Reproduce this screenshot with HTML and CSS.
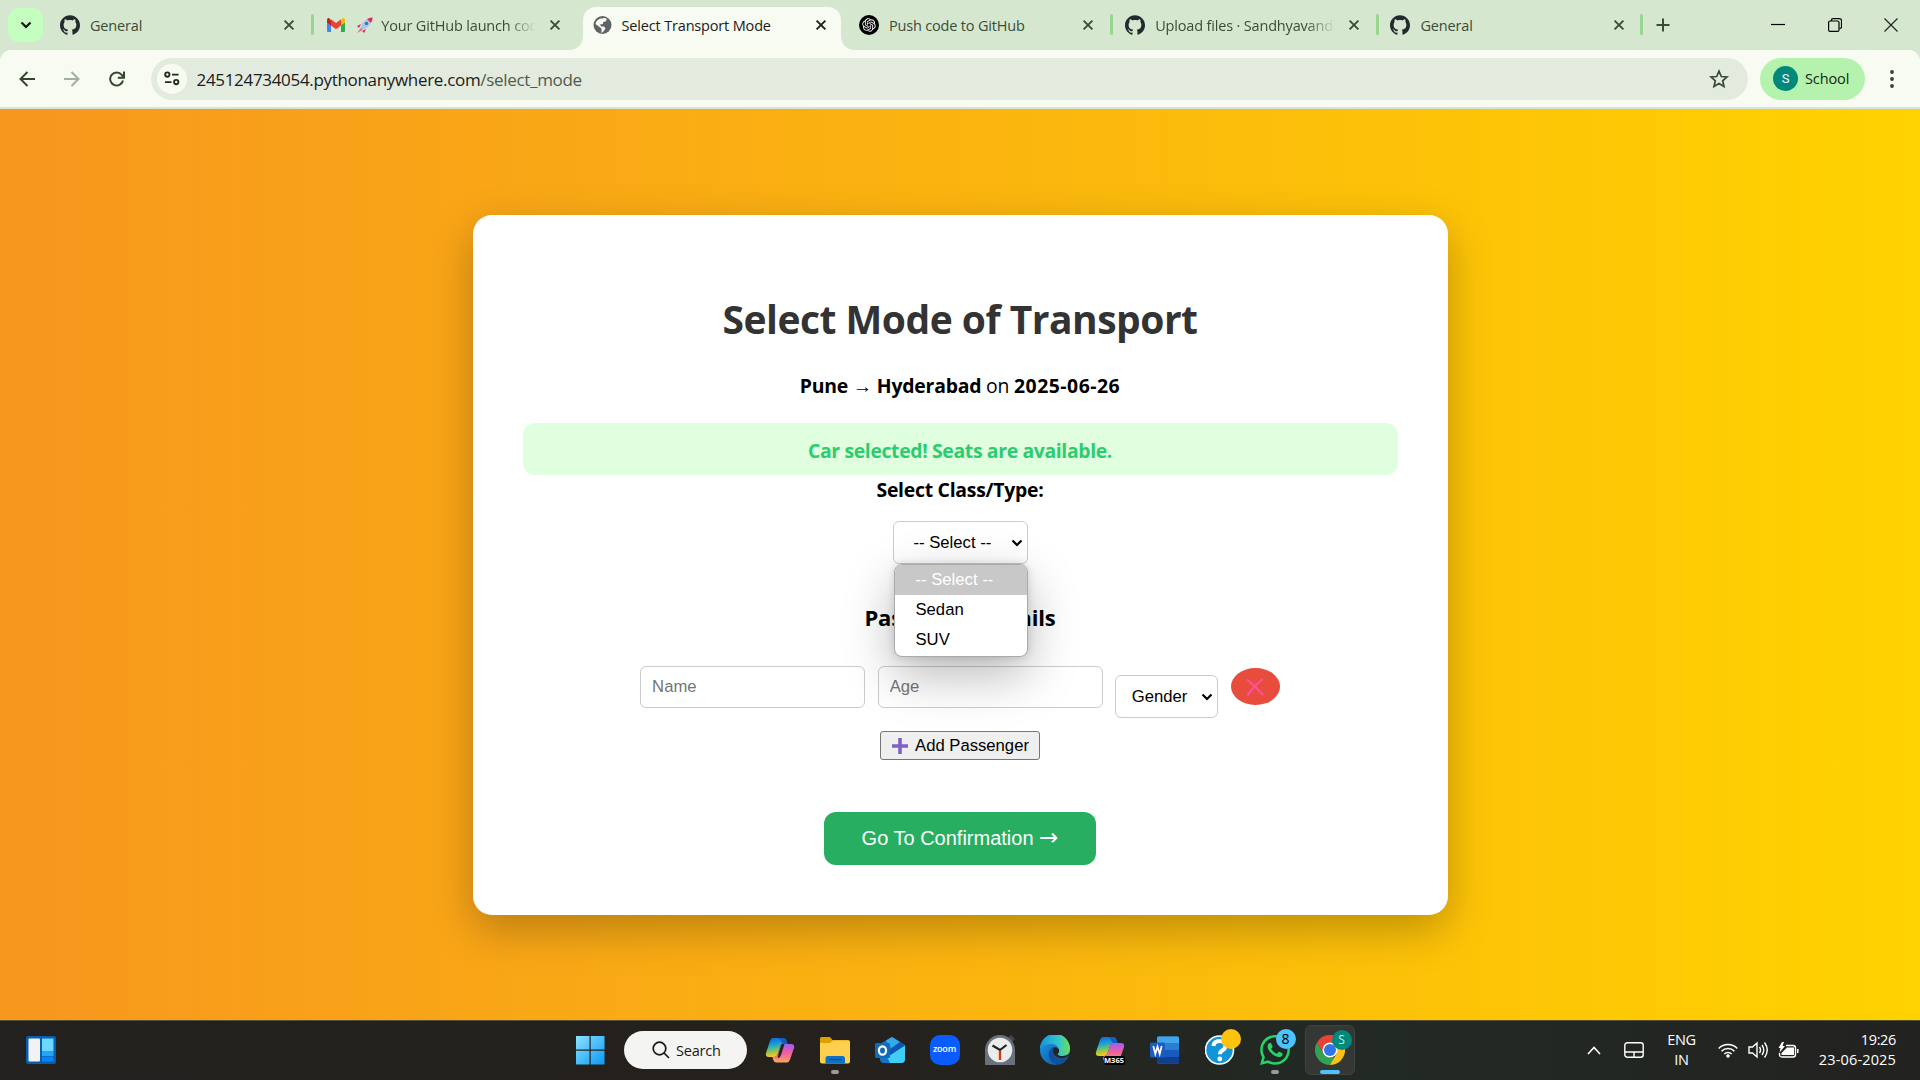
FILE: index.html
```html
<!DOCTYPE html>
<html lang="en">
<head>
<meta charset="utf-8">
<title>Select Transport Mode</title>
<link rel="stylesheet" href="styles.css">
</head>
<body>
<svg class="defs" aria-hidden="true">
  <symbol id="github" viewBox="0 0 24 24"><path fill="#24292f" d="M12 .297c-6.63 0-12 5.373-12 12 0 5.303 3.438 9.8 8.205 11.385.6.113.82-.258.82-.577 0-.285-.01-1.04-.015-2.04-3.338.724-4.042-1.61-4.042-1.61C4.422 18.07 3.633 17.7 3.633 17.7c-1.087-.744.084-.729.084-.729 1.205.084 1.838 1.236 1.838 1.236 1.07 1.835 2.809 1.305 3.495.998.108-.776.417-1.305.76-1.605-2.665-.3-5.466-1.332-5.466-5.93 0-1.31.465-2.38 1.235-3.22-.135-.303-.54-1.523.105-3.176 0 0 1.005-.322 3.3 1.23.96-.267 1.98-.399 3-.405 1.02.006 2.04.138 3 .405 2.28-1.552 3.285-1.23 3.285-1.23.645 1.653.24 2.873.12 3.176.765.84 1.23 1.91 1.23 3.22 0 4.61-2.805 5.625-5.475 5.92.42.36.81 1.096.81 2.22 0 1.606-.015 2.896-.015 3.286 0 .315.21.69.825.57C20.565 22.092 24 17.592 24 12.297c0-6.627-5.373-12-12-12"/></symbol>
  <symbol id="cross" viewBox="0 0 12 12"><path d="M1.6 1.6l8.8 8.8M10.4 1.6L1.6 10.4" stroke="currentColor" stroke-width="1.9" fill="none"/></symbol>
  <symbol id="chev" viewBox="0 0 12 8"><path d="M1.5 1.5L6 6l4.500-4.500" stroke="currentColor" stroke-width="2.200" fill="none"/></symbol>
</svg>

<header class="browser">
  <div class="tabstrip">
    <button class="tab-search"><svg width="12" height="8"><use href="#chev"/></svg></button>
    <div class="tab"><svg class="fav" width="20" height="20"><use href="#github"/></svg><span class="title">General</span><svg class="x" width="12" height="12"><use href="#cross"/></svg></div>
    <div class="tab sep">
      <svg class="fav" width="20" height="20" viewBox="0 0 20 20"><path d="M1 4.500v11.500q0 1 1 1h3V8.500z" fill="#4285f4"/><path d="M19 4.500v11.500q0 1-1 1h-3V8.500z" fill="#34a853"/><path d="M15 5.500v5l4-3V5q0-2.500-2.500-1.800z" fill="#fbbc04"/><path d="M5 5.500v5l-4-3V5q0-2.500 2.500-1.800z" fill="#c5221f"/><path d="M5 4.300l5 3.800 5-3.800v6.200l-5 3.800-5-3.800z" fill="#ea4335"/></svg>
      <span class="title fade"><svg class="rocket" width="17" height="17" viewBox="0 0 17 17"><path d="M5 7l-4 2 2 2zM10 12l-2 4-2-2z" fill="#e8245c"/><path d="M4 12Q6 4 12 2l3 3q-2 6-9 8z" fill="#a9c8e8"/><path d="M11 2q3-1.800 5.500-1.500Q16.800 3 15 6z" fill="#e8245c"/><circle cx="10.500" cy="6.500" r="1.800" fill="#3f6fd0"/><path d="M5 11l-4 5 5.500-3z" fill="#ff5a76"/></svg>Your GitHub launch code</span>
      <svg class="x" width="12" height="12"><use href="#cross"/></svg></div>
    <div class="tab active">
      <svg class="fav globe" width="20" height="20" viewBox="0 0 20 20"><circle cx="9.500" cy="10" r="9" fill="#5f6368"/><path d="M9 3.500q3-1 5 .5l-1.500 2.500-2.500.5v2l-3 .5 1 2h3l1.500 2-2.500 3.500-1.500 1V13.500l-2-1.500-4-3q.5-4 5-5.500z" fill="#f8fbf2"/></svg>
      <span class="title">Select Transport Mode</span><svg class="x" width="12" height="12"><use href="#cross"/></svg></div>
    <div class="tab">
      <svg class="fav" width="20" height="20" viewBox="0 0 40 40"><circle cx="20" cy="20" r="20" fill="#000"/><path transform="translate(6.500 6.500) scale(1.125)" fill="#fff" d="M22.282 9.821a5.985 5.985 0 0 0-.516-4.910 6.046 6.046 0 0 0-6.510-2.900A6.065 6.065 0 0 0 4.981 4.182a5.985 5.985 0 0 0-3.998 2.900 6.046 6.046 0 0 0 .743 7.097 5.980 5.980 0 0 0 .511 4.911 6.051 6.051 0 0 0 6.515 2.900A5.985 5.985 0 0 0 13.260 24a6.056 6.056 0 0 0 5.772-4.206 5.989 5.989 0 0 0 3.998-2.900 6.056 6.056 0 0 0-.748-7.073zm-9.022 12.608a4.476 4.476 0 0 1-2.876-1.041l.142-.080 4.778-2.758a.795.795 0 0 0 .393-.681v-6.737l2.020 1.169a.071.071 0 0 1 .038.052v5.583a4.504 4.504 0 0 1-4.495 4.494zm-9.661-4.125a4.471 4.471 0 0 1-.535-3.014l.142.085 4.783 2.758a.771.771 0 0 0 .781 0l5.843-3.369v2.332a.080.080 0 0 1-.033.062L9.740 19.950a4.499 4.499 0 0 1-6.141-1.646zM2.341 7.896a4.485 4.485 0 0 1 2.366-1.973V11.600a.766.766 0 0 0 .388.677l5.814 3.354-2.020 1.169a.076.076 0 0 1-.071 0l-4.830-2.787A4.504 4.504 0 0 1 2.341 7.872zm16.596 3.856L13.104 8.364 15.119 7.200a.076.076 0 0 1 .071 0l4.830 2.791a4.494 4.494 0 0 1-.677 8.104v-5.677a.790.790 0 0 0-.407-.667zm2.011-3.023l-.142-.085-4.774-2.782a.776.776 0 0 0-.785 0L9.409 9.230V6.897a.066.066 0 0 1 .028-.062l4.830-2.787a4.499 4.499 0 0 1 6.680 4.660zM8.307 12.863l-2.020-1.164a.080.080 0 0 1-.038-.057V6.074a4.499 4.499 0 0 1 7.376-3.454l-.142.081L8.704 5.459a.795.795 0 0 0-.393.681zm1.098-2.365l2.602-1.500 2.607 1.500v2.999l-2.597 1.500-2.607-1.500z"/></svg>
      <span class="title">Push code to GitHub</span><svg class="x" width="12" height="12"><use href="#cross"/></svg></div>
    <div class="tab sep"><svg class="fav" width="20" height="20"><use href="#github"/></svg><span class="title fade">Upload files · Sandhyavandana</span><svg class="x" width="12" height="12"><use href="#cross"/></svg></div>
    <div class="tab sep last"><svg class="fav" width="20" height="20"><use href="#github"/></svg><span class="title">General</span><svg class="x" width="12" height="12"><use href="#cross"/></svg></div>
    <div class="new-tab"><svg width="14" height="14" viewBox="0 0 14 14"><path d="M7 .5v13M.5 7h13" stroke="#3b4c39" stroke-width="2"/></svg></div>
    <div class="win">
      <svg width="14" height="14" viewBox="0 0 14 14"><path d="M0 6.500h14" stroke="#000" stroke-width="1.200"/></svg>
      <svg width="14" height="14" viewBox="0 0 14 14" fill="none" stroke="#000" stroke-width="1.200"><rect x=".6" y="3" width="10.400" height="10.400" rx="1.500"/><path d="M3.500 3V2q0-1.400 1.500-1.400h6.500q2 0 2 2V9q0 1.500-2 1.500"/></svg>
      <svg width="14" height="14" viewBox="0 0 14 14"><path d="M.5.5l13 13M13.500.5l-13 13" stroke="#222" stroke-width="1.200"/></svg>
    </div>
  </div>
  <div class="toolbar">
    <nav class="nav">
      <svg width="16" height="16" viewBox="0 0 16 16"><path d="M16 8H1.800M8.500 1L1.500 8l7 7" fill="none" stroke="#33472f" stroke-width="2"/></svg>
      <svg width="16" height="16" viewBox="0 0 16 16"><path d="M0 8h14.200M7.500 1l7 7-7 7" fill="none" stroke="#a2aca0" stroke-width="2"/></svg>
      <svg width="16" height="16" viewBox="0 0 16 16"><path d="M14 9.500A6.500 6.500 0 1 1 12.800 4L14.500 6" fill="none" stroke="#33472f" stroke-width="2"/><path d="M15 .5v6.300H8.800" fill="none" stroke="#33472f" stroke-width="2"/></svg>
    </nav>
    <div class="omnibox">
      <span class="site"><svg width="16" height="15" viewBox="0 0 17 16" fill="none" stroke="#1f2a1e" stroke-width="2"><circle cx="3.500" cy="3.800" r="2.300"/><path d="M8.500 3.800h7M1 11.800h7"/><circle cx="13" cy="11.800" r="2.300"/></svg></span>
      <span class="url">245124734054.pythonanywhere.com<span class="path">/select_mode</span></span>
      <svg width="20" height="20" viewBox="0 0 20 20"><path d="M10 2.200l2.300 5.300 5.700.5-4.300 3.800 1.300 5.700-5-3-5 3 1.300-5.700L2 8l5.700-.5z" fill="none" stroke="#3b483a" stroke-width="1.700"/></svg>
    </div>
    <div class="profile"><span class="avatar">S</span><span>School</span></div>
    <svg class="dots" width="4" height="18" viewBox="0 0 4 18" fill="#33422f"><circle cx="2" cy="2" r="1.900"/><circle cx="2" cy="9" r="1.900"/><circle cx="2" cy="16" r="1.900"/></svg>
  </div>
</header>

<main class="page">
  <section class="card">
    <h1>Select Mode of Transport</h1>
    <p class="route"><b>Pune</b> <span class="arrow">→</span> <b>Hyderabad</b> on <b class="date">2025-06-26</b></p>
    <div class="alert">Car selected! Seats are available.</div>
    <label class="class-label">Select Class/Type:</label>
    <div class="select class-select">
      <span>-- Select --</span><svg width="12" height="8"><use href="#chev"/></svg>
      <ul class="menu"><li class="current">-- Select --</li><li>Sedan</li><li>SUV</li></ul>
    </div>
    <h3>Passenger Details</h3>
    <div class="passenger">
      <input placeholder="Name">
      <input placeholder="Age">
      <div class="select gender"><span>Gender</span><svg width="12" height="8"><use href="#chev"/></svg></div>
      <button class="remove"><svg width="18" height="18" viewBox="0 0 18 18"><path d="M1.500 2q8 6 15 14.500M16 1.500Q8 8 2 16.500" fill="none" stroke="#ff4f9b" stroke-width="2.200" stroke-linecap="round"/></svg></button>
    </div>
    <button class="add"><svg width="16" height="16" viewBox="0 0 16 16"><path d="M6.200 0h3.600v6.200H16v3.600H9.800V16H6.200V9.800H0V6.200h6.200z" fill="#8060c4"/></svg><span>Add Passenger</span></button>
    <button class="go">Go To Confirmation <span class="go-arrow">→</span></button>
  </section>
</main>

<footer class="taskbar">
  <svg class="widgets" width="30" height="28" viewBox="0 0 30 28"><rect width="30" height="28" rx="2" fill="#0a5cb0"/><rect x="2.500" y="2.500" width="11.500" height="23" rx="1" fill="#f2f2f2"/><path d="M16 2.500h11.500V15H16z" fill="#6bd8ff"/><path d="M16 15h11.500v5H16z" fill="#22a4f8"/><path d="M16 20.500h11.500v5H16z" fill="#0a84f0"/></svg>
  <div class="apps">
    <svg class="start" width="30" height="30" viewBox="0 0 30 30"><defs><linearGradient id="w" x2="1" y2="1"><stop stop-color="#8be3ff"/><stop offset="1" stop-color="#0a98f8"/></linearGradient></defs><path fill="url(#w)" d="M1 1h13.500v13.500H1zM15.700 1H29.500v13.500H15.700zM1 15.700h13.500V29.500H1zM15.700 15.700H29.500V29.500H15.700z"/></svg>
    <div class="search"><svg width="18" height="18" viewBox="0 0 18 18" fill="none" stroke="#1a1a1a" stroke-width="1.700"><circle cx="7.500" cy="7.500" r="6.300"/><path d="M12 12l5 5"/></svg><span>Search</span></div>
    <div class="app"><svg width="30" height="30" viewBox="0 0 30 30"><defs><linearGradient id="c1" x2=".2" y2="1"><stop stop-color="#1560d8"/><stop offset=".4" stop-color="#18a0d8"/><stop offset=".7" stop-color="#7cc65a"/><stop offset="1" stop-color="#ffc51f"/></linearGradient><linearGradient id="c2" x2="0" y2="1"><stop stop-color="#a35cf0"/><stop offset=".5" stop-color="#f0609c"/><stop offset="1" stop-color="#ffa557"/></linearGradient></defs><path d="M8 3h10q2.500 0 3.500 3l1 3h-4q-2.500 0-3.500 3l-2.500 7.500Q11.500 22 9 22H4q-4 0-3-4L5 6q1-3 3-3z" fill="url(#c1)"/><path d="M22 27.500H11.500q-2.500 0-3.500-3L7.500 22H9q2.500 0 3.500-2.500L15 12q1-3 3.500-3H26q4 0 3 4l-4 11.500q-1 3-3 3z" fill="url(#c2)"/><path d="M14 17l2.500-8h3L16 20q-1 3-3.500 3z" fill="#262320"/><path d="M13 3h5q2.500 0 3.500 3l1 3h-4q-2-.5-3-4z" fill="#1859c4"/></svg></div>
    <div class="app"><svg width="30" height="30" viewBox="0 0 30 30"><path d="M0 3.500Q0 2 1.500 2H10l2.500 3H28q2 0 2 2v6H0z" fill="#e0a100"/><path d="M0 8h10l3-2.500h15.500q1.500 0 1.500 2V26.500q0 2-2 2H2q-2 0-2-2z" fill="#ffd04e"/><path d="M5.500 28.500V23.500q0-2.500 2.500-2.500h14.500q2.500 0 2.500 2.500v5z" fill="#1070c4"/><path d="M9 24.500h12.500" stroke="#0a4c91" stroke-width="1.300"/></svg><i class="run"></i></div>
    <div class="app"><svg width="30" height="30" viewBox="0 0 30 30"><path d="M5 9L17 2l13 8v14q0 4-4 4H9q-4 0-4-4z" fill="#1673c9"/><path d="M11 5.500L17 2l8 5-9 6z" fill="#35a9ea"/><path d="M30 10L12 22l3 6h11q4 0 4-4z" fill="#42cdf5"/><path d="M25 7l5 3.500-17 11L11 18z" fill="#0a57b5"/><rect y="8" width="15" height="15" rx="1.500" fill="#0f6cbd"/><ellipse cx="7.500" cy="15.500" rx="3.600" ry="4.200" fill="none" stroke="#fff" stroke-width="2.200"/></svg></div>
    <div class="app zoom"><span>zoom</span></div>
    <div class="app"><svg width="30" height="30" viewBox="0 0 30 30"><path d="M23 3l3-3 4 4-3 3z" fill="#43474c"/><path d="M0 30V15a15 15 0 0 1 30 0V30z" fill="#67727c"/><circle cx="15" cy="15" r="12.300" fill="#ececec"/><path d="M7.500 10.500L15 15l6.500-5" stroke="#222" stroke-width="2.200" fill="none"/><path d="M15 16v9" stroke="#d83b01" stroke-width="2.400"/></svg></div>
    <div class="app"><svg width="30" height="30" viewBox="0 0 30 30"><defs><linearGradient id="e1"><stop stop-color="#1593dc"/><stop offset=".6" stop-color="#31c5cf"/><stop offset="1" stop-color="#6ade52"/></linearGradient><linearGradient id="e2" x2="1" y2="1"><stop stop-color="#1b9de2"/><stop offset="1" stop-color="#0c4d9f"/></linearGradient></defs><circle cx="15" cy="15" r="15" fill="url(#e2)"/><path d="M0 14A15 15 0 0 1 30 13.500q.3 6.500-7 7.500-5 .2-5.500-2 2-1.500 1.500-4.500Q17.500 9 11 9 3.500 9 0 14z" fill="url(#e1)"/><path d="M17.500 19q2-1.500 1.500-4.500-1.500-2.500-5-2.500-2 2-1 5.500 2 5 8.500 6 4-.2 7-2.500l2-4.500.5 6-2.500 1.200L30 18q-2.500 3-7 3-5 .2-5.500-2z" fill="#252422"/><path d="M13 12q-6 4-3.800 10.500 3 7 10.500 7 5-1.500 7.800-6.500-7.500 3-11.800-1-3.700-4.500-2.700-10z" fill="#104f9e"/></svg></div>
    <div class="app"><svg width="30" height="30" viewBox="0 0 30 30"><path d="M8 2h10q2.500 0 3.500 3l1 3h-4q-2.500 0-3.500 3l-2.500 7.500Q11.500 21 9 21H4q-4 0-3-4L5 5q1-3 3-3z" fill="url(#c1)"/><path d="M22 26.500H11.500q-2.500 0-3.500-3L9 21q2.500 0 3.500-2.500L15 11q1-3 3.500-3H26q4 0 3 4l-4 11.500q-1 3-3 3z" fill="url(#c2)"/><path d="M13 2h5q2.500 0 3.500 3l1 3h-4q-2-.5-3-4z" fill="#1859c4"/></svg><span class="m365">M365</span></div>
    <div class="app"><svg width="30" height="30" viewBox="0 0 30 30"><rect x="7" y="1.500" width="22" height="27" rx="1.500" fill="#2b7cd3"/><path d="M7 3q0-1.500 1.500-1.500h19Q29 1.500 29 3v5H7z" fill="#41a5ee"/><path d="M7 15h22v7H7z" fill="#185abd"/><path d="M7 22h22v5q0 1.500-1.500 1.500h-19Q7 28.500 7 27z" fill="#103f91"/><rect y="7.500" width="15" height="15" rx="1.500" fill="#1b5cbe"/><path d="M3.300 11l2 8 2.200-7.500 2.200 7.500 2-8" fill="none" stroke="#fff" stroke-width="1.700"/></svg></div>
    <div class="app"><svg width="30" height="30" viewBox="0 0 30 30"><circle cx="14.500" cy="15" r="14" fill="#1295d8" stroke="#fff" stroke-width="1.600"/><path d="M8.500 11q.5-5 6-5t6 4.500q0 3-3 4.700-2.500 1.300-2.500 4" fill="none" stroke="#fff" stroke-width="4"/><circle cx="14.800" cy="24" r="2.400" fill="#fff"/></svg><b class="badge amber"></b></div>
    <div class="app"><svg width="30" height="30" viewBox="0 0 24 24"><path fill="#25d366" d="M17.472 14.382c-.297-.149-1.758-.867-2.030-.967-.273-.099-.471-.148-.670.150-.197.297-.767.966-.940 1.164-.173.199-.347.223-.644.075-.297-.150-1.255-.463-2.390-1.475-.883-.788-1.480-1.761-1.653-2.059-.173-.297-.018-.458.130-.606.134-.133.298-.347.446-.520.149-.174.198-.298.298-.497.099-.198.050-.371-.025-.520-.075-.149-.669-1.612-.916-2.207-.242-.579-.487-.500-.669-.510-.173-.008-.371-.010-.570-.010-.198 0-.520.074-.792.372-.272.297-1.040 1.016-1.040 2.479 0 1.462 1.065 2.875 1.213 3.074.149.198 2.096 3.200 5.077 4.487.709.306 1.262.489 1.694.625.712.227 1.360.195 1.871.118.571-.085 1.758-.719 2.006-1.413.248-.694.248-1.289.173-1.413-.074-.124-.272-.198-.570-.347m-5.421 7.403h-.004a9.870 9.870 0 0 1-5.031-1.378l-.361-.214-3.741.982.998-3.648-.235-.374a9.860 9.860 0 0 1-1.510-5.260c.001-5.450 4.436-9.884 9.888-9.884 2.640 0 5.122 1.030 6.988 2.898a9.825 9.825 0 0 1 2.893 6.994c-.003 5.450-4.437 9.884-9.885 9.884m8.413-18.297A11.815 11.815 0 0 0 12.050 0C5.495 0 .160 5.335.157 11.892c0 2.096.547 4.142 1.588 5.945L.057 24l6.305-1.654a11.882 11.882 0 0 0 5.683 1.448h.005c6.554 0 11.890-5.335 11.893-11.893a11.821 11.821 0 0 0-3.480-8.413z"/></svg><b class="badge blue">8</b><i class="run"></i></div>
    <div class="app open"><svg width="30" height="30" viewBox="0 0 30 30"><path d="M2 7.500A15 15 0 0 1 28 7.500H15L8.500 18.800z" fill="#ea4335"/><path d="M2 7.500L8.500 18.800 15 22.500h6.500L15 30A15 15 0 0 1 2 7.500z" fill="#34a053"/><path d="M28 7.500A15 15 0 0 1 15 30l6.500-11.200V7.500z" fill="#fbc116"/><circle cx="15" cy="15" r="7.500" fill="#fff"/><circle cx="15" cy="15" r="6" fill="#2f74e8"/></svg><b class="badge teal">S</b><i class="run on"></i></div>
  </div>
  <div class="tray">
    <svg class="up" width="14" height="9" viewBox="0 0 14 9"><path d="M1 8l6-6.500L13 8" fill="none" stroke="#fff" stroke-width="1.700"/></svg>
    <svg class="pad" width="20" height="16" viewBox="0 0 20 16" fill="none" stroke="#fff" stroke-width="1.400"><rect x=".8" y=".8" width="18.400" height="14.400" rx="2.500"/><path d="M1 10h18M10 10v5"/></svg>
    <div class="lang"><span>ENG</span><span>IN</span></div>
    <svg class="wifi" width="20" height="15" viewBox="0 0 20 15" fill="none" stroke="#fff" stroke-width="1.500"><path d="M.7 5.500a13 13 0 0 1 18.600 0M3.500 8.300a9.200 9.200 0 0 1 13 0M6.300 11a5.300 5.300 0 0 1 7.400 0"/><circle cx="10" cy="13" r="1.300" fill="#fff" stroke-width="1"/></svg>
    <svg class="vol" width="21" height="18" viewBox="0 0 21 18" fill="none" stroke="#fff" stroke-width="1.400"><path d="M1 6v6h3.500l4.500 4V2L4.500 6zM11.500 6q2 3 0 6M14 4q3.500 5 0 10M16.500 1.500q5.500 7.500 0 15"/></svg>
    <svg class="bat" width="21" height="17" viewBox="0 0 21 17"><path d="M8 3.500h7q2.500 0 2.500 2.500v6.500q0 2.500-2.500 2.500H4q-2.500 0-2.500-2.500V11" fill="none" stroke="#fff" stroke-width="1.400"/><path d="M3.500 13v-2L9 5.500h7V13zM19 7h1.500v4H19z" fill="#fff"/><path d="M4 0L.5 6h2L1.500 10.500 7 4H4.500L6 0z" fill="#fff"/></svg>
    <div class="clock"><span class="time">19:26</span><span class="day">23-06-2025</span></div>
  </div>
</footer>
</body>
</html>
```
FILE: styles.css
```css
* { box-sizing: border-box; }
body { margin: 0; width: 1920px; height: 1080px; overflow: hidden; display: flex; flex-direction: column; font-family: "Open Sans", "Noto Sans", sans-serif; font-size: 19.4px; color: #000; }
svg { display: block; flex: none; }
button { font: inherit; border: 0; padding: 0; }
h1, h3, p, ul { margin: 0; padding: 0; }
.defs { position: absolute; width: 0; height: 0; }

/* browser chrome */
.browser { height: 109px; background: #d5e7cf; border-bottom: 2px solid #d8e3d6; }
.tabstrip { height: 50px; display: flex; align-items: center; font-size: 14.500px; letter-spacing: -.17px; color: #3b4c39; }
.tab-search { width: 35px; height: 34px; margin: 0 3px 0 8px; border-radius: 11px; background: #c4ffbf; color: #111; display: grid; place-items: center; }
.tab { position: relative; width: 266.300px; height: 50px; padding: 0 17.500px 0 14px; display: flex; align-items: center; }
.tab.sep::before, .tab.last::after { content: ""; position: absolute; left: -1px; top: 14px; width: 3px; height: 21px; border-radius: 2px; background: #99d68f; }
.tab.last::after { left: auto; right: 1px; }
.tab.last { padding-right: 19px; padding-left: 13px; }
.title { flex: 1; margin: 0 13px 0 10px; overflow: hidden; display: flex; align-items: center; white-space: pre; }
.fade { -webkit-mask-image: linear-gradient(90deg, #000 84%, transparent); mask-image: linear-gradient(90deg, #000 84%, transparent); }
.rocket { margin: 0 8px 0 0; }
.tab.active { z-index: 0; color: #1b201a; }
.tab.active .title { margin-left: 9px; }
.tab.active::after { content: ""; position: absolute; z-index: -1; left: 4px; right: 4px; top: 7px; bottom: 0; border-radius: 13px 13px 0 0; background: #f8fbf2; }
/* concave feet of the active tab */
.tab.active::before { content: ""; position: absolute; z-index: -2; left: -9px; right: -9px; bottom: 0; height: 13px; background: radial-gradient(circle 13px at 0 0, #d5e7cf 12.500px, #f8fbf2 13px) left / 13px 13px no-repeat, radial-gradient(circle 13px at 100% 0, #d5e7cf 12.500px, #f8fbf2 13px) right / 13px 13px no-repeat; }
.new-tab { margin-left: 12.500px; flex: 1; }
.win { display: flex; gap: 42.500px; margin-right: 22px; }
.toolbar { height: 57px; padding: 0 26px 0 19px; border-radius: 11px 11px 0 0; background: #f8fbf2; display: flex; align-items: center; }
.nav { display: flex; gap: 29px; margin-right: 26px; }
.omnibox { flex: 1; height: 42px; border-radius: 21px; background: #e3ebdf; display: flex; align-items: center; padding: 0 19px 0 6px; }
.site { width: 30px; height: 30px; border-radius: 50%; background: #f8fbf2; display: grid; place-items: center; }
.url { flex: 1; margin: 1px 0 0 9.500px; font-size: 17px; letter-spacing: -.32px; color: #1b201a; }
.path { color: #505a4e; }
.profile { width: 105px; height: 42px; margin: 0 25px 0 12px; border-radius: 21px; background: #b5f2ae; display: flex; align-items: center; gap: 7px; padding-left: 13px; font-size: 14.500px; letter-spacing: -.1px; color: #12280f; }
.avatar { width: 25px; height: 25px; border-radius: 50%; background: #00897b; color: #fff; font: 13px/25px Roboto, sans-serif; text-align: center; }

/* booking page */
.page { flex: 1; background: linear-gradient(to right, #f7971e, #ffd200); display: flex; justify-content: center; align-items: flex-start; padding-top: 106px; }
.card { width: 975px; height: 700px; padding: 78px 50px 0; border-radius: 19px; background: #fff; box-shadow: 0 15px 44px rgba(0,0,0,.25); display: flex; flex-direction: column; align-items: center; }
h1 { font-size: 39px; line-height: 52px; letter-spacing: -.5px; color: #333; }
.route { margin-top: 26.500px; line-height: 28px; letter-spacing: -.22px; white-space: nowrap; }
.route .date { letter-spacing: .5px; }
.alert { align-self: stretch; height: 52px; margin-top: 23.500px; padding-top: 14px; border-radius: 12px; background: #dfffdf; color: #2ecc71; font-weight: 700; line-height: 28px; letter-spacing: -.36px; text-align: center; }
.class-label { height: 28px; padding-top: 1px; font-weight: 700; line-height: 28px; letter-spacing: -.26px; }
.select { border: 1px solid #ccc; border-radius: 6px; background: #fff; display: flex; align-items: center; justify-content: space-between; font: 16.670px "Liberation Sans", sans-serif; }
.class-select { position: relative; width: 135px; height: 43px; margin-top: 18px; padding: 0 4px 0 20px; }
.menu { position: absolute; left: 0; top: 42px; width: 134px; height: 93px; border: 1px solid #aaa; border-radius: 8px; overflow: hidden; background: #fff; list-style: none; box-shadow: 0 18px 50px rgba(0,0,0,.28), 0 0 8px rgba(0,0,0,.15); }
.menu li { height: 30px; line-height: 30px; padding-left: 21px; }
.menu .current { background: #c8c8c8; color: #fff; }
h3 { margin-top: 38px; font-size: 22px; line-height: 30px; letter-spacing: -.17px; }
.passenger { margin-top: 34px; display: flex; align-items: flex-start; gap: 12.600px; }
input { width: 225px; height: 42px; border: 1px solid #ccc; border-radius: 6px; padding: 0 11px; background: transparent; font: 16.670px "Liberation Sans", sans-serif; }
input::placeholder { color: #757575; }
.gender { width: 103px; height: 43px; margin-top: 9px; padding: 0 4px 0 15.500px; }
.remove { width: 49px; height: 37px; margin-top: 2px; border-radius: 50%; background: #e74c3c; display: grid; place-items: center; }
.add { width: 160px; height: 29px; margin-top: 13px; padding: 1px 0 0 1px; border: 1px solid #767676; border-radius: 3px; background: #efefef; display: flex; align-items: center; justify-content: center; gap: 7px; font: 16.670px "Liberation Sans", sans-serif; }
.go { width: 272px; height: 53px; margin-top: 52px; border-radius: 12px; background: #27ae60; color: #fff; font: 20px "Liberation Sans", sans-serif; }
.go-arrow { font: 23px/20px "DejaVu Sans", sans-serif; }

/* taskbar */
.taskbar { height: 60px; background: linear-gradient(90deg, #22211f, #25211c 45%, #222a25 72%, #222220); border-top: 1px solid #55503a; padding-bottom: 1px; display: flex; align-items: center; color: #fff; font-size: 14.500px; }
.widgets { margin-left: 26px; }
.apps { display: flex; align-items: center; margin-left: 519px; }
.search { width: 123px; height: 38px; margin: 0 7.500px 0 19px; border-radius: 19px; background: #f4f4f2; color: #1a1a1a; display: flex; align-items: center; gap: 6px; padding-left: 28px; letter-spacing: -.2px; }
.app { position: relative; width: 50px; height: 50px; margin-right: 5px; display: grid; place-items: center; border-radius: 6px; }
.zoom span { width: 30px; height: 30px; border-radius: 10px; background: #0b5cff; font: 600 9px/28px "Open Sans", sans-serif; letter-spacing: -.2px; text-align: center; }
.m365 { position: absolute; left: 19px; bottom: 10px; width: 21px; height: 9px; border-radius: 2px; background: #000; font: 700 7.500px/9px "Open Sans", sans-serif; text-align: center; }
.badge { position: absolute; left: 26px; top: 4px; width: 20px; height: 20px; border-radius: 50%; font: 14px/20px "Open Sans", sans-serif; text-align: center; color: #000; }
.amber { background: #ffc20e; }
.blue { background: #4cc2ff; }
.teal { background: #00897b; color: #cfeeea; font-size: 12px; }
.open { background: #343733; border: 1px solid #3f423e; }
.run { position: absolute; left: 21px; bottom: 1px; width: 8px; height: 4px; border-radius: 2px; background: #9a9a98; }
.run.on { left: 14px; width: 20px; background: #4cc2ff; bottom: 0; }
.tray { flex: 1; display: flex; align-items: center; justify-content: flex-end; padding-right: 24px; line-height: 20px; }
.pad { margin-left: 23px; }
.lang { display: flex; flex-direction: column; align-items: center; margin: 0 22px 0 23.500px; letter-spacing: -.3px; }
.vol { margin: 0 9px 0 10px; }
.clock { display: flex; flex-direction: column; align-items: flex-end; margin-left: 20px; }
.time { letter-spacing: -.35px; }
.day { letter-spacing: .15px; }
```
